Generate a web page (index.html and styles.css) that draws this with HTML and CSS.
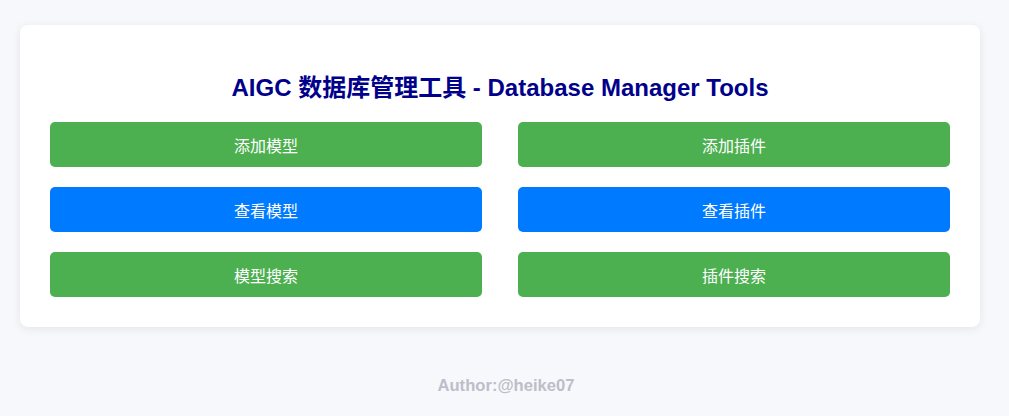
FILE: index.html
```html
<!DOCTYPE html>
<html lang="zh">
<head>
<meta charset="utf-8">
<title>AIGC 数据库管理工具</title>
<link rel="stylesheet" href="styles.css">
</head>
<body>
<div class="page">
  <div class="card">
    <h1 class="title">AIGC 数据库管理工具 - Database Manager Tools</h1>
    <div class="grid">
      <button class="btn green">添加模型</button>
      <button class="btn green">添加插件</button>
      <button class="btn blue">查看模型</button>
      <button class="btn blue">查看插件</button>
      <button class="btn green">模型搜索</button>
      <button class="btn green">插件搜索</button>
    </div>
  </div>
  <div class="footer">Author:@heike07</div>
</div>
</body>
</html>
```

FILE: styles.css
```css
html, body {
  margin: 0;
  padding: 0;
  background: #f7f8fc;
  font-family: "Liberation Sans", Arial, "Noto Sans CJK SC", sans-serif;
}
.page {
  padding: 25px 20px 0 20px;
}
.card {
  width: 960px;
  box-sizing: border-box;
  background: #ffffff;
  border-radius: 8px;
  box-shadow: 0 2px 10px rgba(0, 0, 0, 0.08);
  padding: 46px 30px 30px 30px;
}
.title {
  margin: 0 0 17px 0;
  text-align: center;
  font-size: 24px;
  line-height: 34px;
  font-weight: bold;
  color: #00008b;
}
.grid {
  display: grid;
  grid-template-columns: 1fr 1fr;
  column-gap: 36px;
  row-gap: 20px;
}
.btn {
  height: 45px;
  border: none;
  border-radius: 5px;
  color: #ffffff;
  font-family: "Noto Sans CJK SC", "Liberation Sans", sans-serif;
  font-size: 16px;
  padding: 0;
  cursor: pointer;
}
.green { background: #4caf50; }
.blue { background: #007bff; }
.footer {
  margin-top: 48px;
  padding-left: 3px;
  text-align: center;
  font-size: 16.6px;
  font-weight: bold;
  color: #bdbec8;
  line-height: 22px;
}
```
